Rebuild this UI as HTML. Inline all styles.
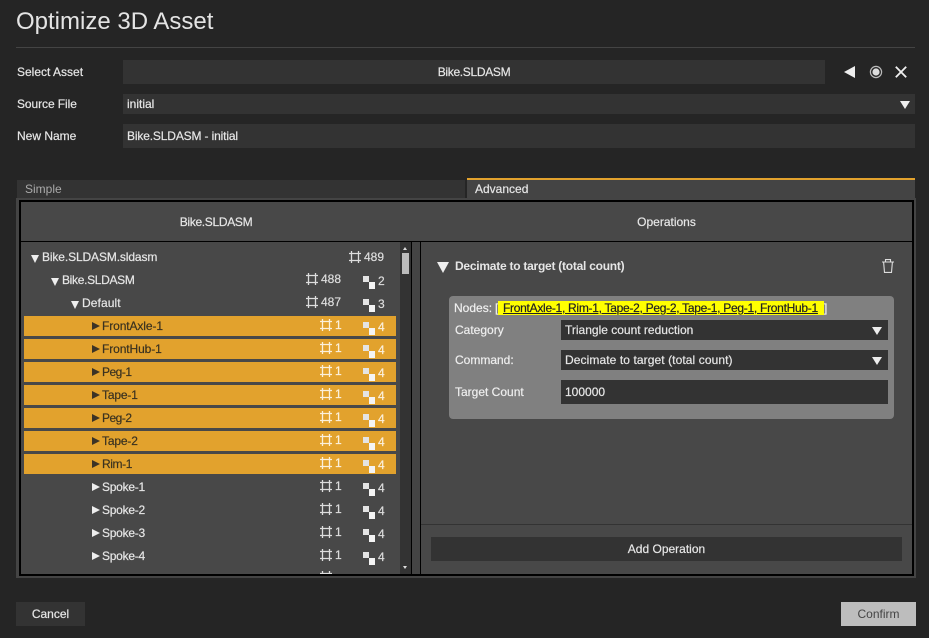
<!DOCTYPE html>
<html><head><meta charset="utf-8">
<style>
*{box-sizing:border-box}
html,body{margin:0;padding:0;width:929px;height:638px;overflow:hidden;background:#252525}
body{position:relative;font-family:"Liberation Sans",sans-serif;font-size:12px;color:#e6e6e6}
.a{position:absolute}
.t{position:absolute;white-space:nowrap;line-height:14px;-webkit-text-stroke:.2px currentColor}
.b{background:#333}
.tri{position:absolute;width:0;height:0}
.d{border-left:5px solid transparent;border-right:5px solid transparent;border-top:8px solid #eee}
.td{border-left:4.5px solid transparent;border-right:4.5px solid transparent;border-top:8px solid #eee}
.r,.rd{border-top:4.5px solid transparent;border-bottom:4.5px solid transparent;border-left:8px solid #eee}
.rd{border-left-color:#3b3326}
.row{position:absolute;left:24px;width:372px;height:20px;background:#e2a22d}
.dk{color:#3a3220}
.n{color:#ddd}
.w{color:#fbf0dc}
svg{position:absolute;overflow:visible}
.s{position:absolute;width:6px;height:6px;background:#e4e4e4}
.s:after{content:"";position:absolute;left:5.5px;top:6px;width:6.5px;height:6.5px;background:#f4f4f4}
.k{letter-spacing:-.32px}
</style></head><body>
<svg width="0" height="0" style="position:absolute"><defs>
<symbol id="h" viewBox="0 0 12 12"><path d="M0 2.5H12M0 9.5H12M2.5 0V12M9.5 0V12" stroke="#ddd" stroke-width="1.3" fill="none"/></symbol>
<symbol id="ho" viewBox="0 0 12 12"><path d="M0 2.5H12M0 9.5H12M2.5 0V12M9.5 0V12" stroke="#fbf0dc" stroke-width="1.3" fill="none"/></symbol>
</defs></svg>

<div class="t" style="left:16px;top:8px;font-size:24px;line-height:28px;color:#e4e4e4;-webkit-text-stroke:0">Optimize 3D Asset</div>
<div class="a" style="left:16px;top:47px;width:899px;height:1px;background:#444"></div>

<div class="t" style="left:17px;top:65px">Select Asset</div>
<div class="a b" style="left:123px;top:60px;width:702px;height:24px"></div>
<div class="t k" style="left:123px;width:702px;top:65px;text-align:center">Bike.SLDASM</div>
<div class="tri" style="left:844px;top:66px;border-top:6px solid transparent;border-bottom:6px solid transparent;border-right:11px solid #eee"></div>
<svg style="left:869px;top:65px" width="14" height="14"><circle cx="7" cy="7" r="5.6" fill="none" stroke="#bbb" stroke-width="1.2"/><circle cx="7" cy="7" r="3.6" fill="#ddd"/></svg>
<svg style="left:895px;top:66px" width="12" height="12"><path d="M.8 .8L11.2 11.2M11.2 .8L.8 11.2" stroke="#f0f0f0" stroke-width="1.8"/></svg>

<div class="t" style="left:17px;top:97px;letter-spacing:-.08px">Source File</div>
<div class="a b" style="left:123px;top:94px;width:792px;height:20px"></div>
<div class="t" style="left:127px;top:97px">initial</div>
<div class="tri d" style="left:900px;top:101px"></div>

<div class="t" style="left:17px;top:129px">New Name</div>
<div class="a b" style="left:123px;top:124px;width:792px;height:24px"></div>
<div class="t" style="left:127px;top:129px;letter-spacing:-.15px">Bike.SLDASM - initial</div>

<div class="a b" style="left:17px;top:180px;width:448px;height:18px"></div>
<div class="t" style="left:25px;top:182px;color:#aaa;-webkit-text-stroke:0">Simple</div>
<div class="a" style="left:467px;top:178px;width:448px;height:20px;background:#444;border-top:2px solid #e2a22d"></div>
<div class="t" style="left:475px;top:182px">Advanced</div>

<div class="a" style="left:16px;top:198px;width:900px;height:380px;background:#444"></div>
<div class="a" style="left:19px;top:200px;width:895px;height:376px;background:#484848;border:2px solid #000"></div>
<div class="a" style="left:21px;top:241px;width:891px;height:1px;background:#000"></div>
<div class="t k" style="left:21px;width:390px;top:215px;text-align:center">Bike.SLDASM</div>
<div class="t" style="left:421px;width:491px;top:215px;text-align:center">Operations</div>

<!-- tree rows -->
<div class="row" style="top:316px"></div>
<div class="row" style="top:339px"></div>
<div class="row" style="top:362px"></div>
<div class="row" style="top:385px"></div>
<div class="row" style="top:408px"></div>
<div class="row" style="top:431px"></div>
<div class="row" style="top:454px"></div>

<div class="tri td" style="left:31px;top:255px"></div><div class="t" style="left:42px;top:250px;letter-spacing:-.12px">Bike.SLDASM.sldasm</div>
<div class="tri td" style="left:51px;top:278px"></div><div class="t k" style="left:62px;top:273px">Bike.SLDASM</div>
<div class="tri td" style="left:71px;top:301px"></div><div class="t" style="left:82px;top:296px;letter-spacing:.1px">Default</div>

<svg style="left:349px;top:251px" width="12" height="12"><use href="#h"/></svg><div class="t n" style="left:364px;top:250px">489</div>
<svg style="left:306px;top:273px" width="12" height="12"><use href="#h"/></svg><div class="t n" style="left:321px;top:272px">488</div>
<div class="s" style="left:363px;top:276px"></div><div class="t n" style="left:378px;top:274px">2</div>
<svg style="left:306px;top:296px" width="12" height="12"><use href="#h"/></svg><div class="t n" style="left:321px;top:295px">487</div>
<div class="s" style="left:363px;top:299px"></div><div class="t n" style="left:378px;top:297px">3</div>

<div class="tri rd" style="left:92px;top:322px"></div><div class="t dk" style="left:102px;top:319px;letter-spacing:-.1px">FrontAxle-1</div>
<div class="tri rd" style="left:92px;top:345px"></div><div class="t dk" style="left:102px;top:342px;letter-spacing:-.1px">FrontHub-1</div>
<div class="tri rd" style="left:92px;top:368px"></div><div class="t dk" style="left:102px;top:365px;letter-spacing:-.5px">Peg-1</div>
<div class="tri rd" style="left:92px;top:391px"></div><div class="t dk" style="left:102px;top:388px;letter-spacing:-.15px">Tape-1</div>
<div class="tri rd" style="left:92px;top:414px"></div><div class="t dk" style="left:102px;top:411px;letter-spacing:-.5px">Peg-2</div>
<div class="tri rd" style="left:92px;top:437px"></div><div class="t dk" style="left:102px;top:434px;letter-spacing:-.15px">Tape-2</div>
<div class="tri rd" style="left:92px;top:460px"></div><div class="t dk" style="left:102px;top:457px;letter-spacing:-.4px">Rim-1</div>

<svg style="left:320px;top:319px" width="12" height="12"><use href="#ho"/></svg><div class="t w" style="left:335px;top:318px">1</div><div class="s" style="left:363px;top:322px"></div><div class="t w" style="left:378px;top:320px">4</div>
<svg style="left:320px;top:342px" width="12" height="12"><use href="#ho"/></svg><div class="t w" style="left:335px;top:341px">1</div><div class="s" style="left:363px;top:345px"></div><div class="t w" style="left:378px;top:343px">4</div>
<svg style="left:320px;top:365px" width="12" height="12"><use href="#ho"/></svg><div class="t w" style="left:335px;top:364px">1</div><div class="s" style="left:363px;top:368px"></div><div class="t w" style="left:378px;top:366px">4</div>
<svg style="left:320px;top:388px" width="12" height="12"><use href="#ho"/></svg><div class="t w" style="left:335px;top:387px">1</div><div class="s" style="left:363px;top:391px"></div><div class="t w" style="left:378px;top:389px">4</div>
<svg style="left:320px;top:411px" width="12" height="12"><use href="#ho"/></svg><div class="t w" style="left:335px;top:410px">1</div><div class="s" style="left:363px;top:414px"></div><div class="t w" style="left:378px;top:412px">4</div>
<svg style="left:320px;top:434px" width="12" height="12"><use href="#ho"/></svg><div class="t w" style="left:335px;top:433px">1</div><div class="s" style="left:363px;top:437px"></div><div class="t w" style="left:378px;top:435px">4</div>
<svg style="left:320px;top:457px" width="12" height="12"><use href="#ho"/></svg><div class="t w" style="left:335px;top:456px">1</div><div class="s" style="left:363px;top:460px"></div><div class="t w" style="left:378px;top:458px">4</div>

<div class="tri r" style="left:92px;top:483px"></div><div class="t" style="left:102px;top:480px;letter-spacing:-.25px">Spoke-1</div>
<div class="tri r" style="left:92px;top:506px"></div><div class="t" style="left:102px;top:503px;letter-spacing:-.25px">Spoke-2</div>
<div class="tri r" style="left:92px;top:529px"></div><div class="t" style="left:102px;top:526px;letter-spacing:-.25px">Spoke-3</div>
<div class="tri r" style="left:92px;top:552px"></div><div class="t" style="left:102px;top:549px;letter-spacing:-.25px">Spoke-4</div>

<svg style="left:320px;top:480px" width="12" height="12"><use href="#h"/></svg><div class="t n" style="left:335px;top:479px">1</div><div class="s" style="left:363px;top:483px"></div><div class="t n" style="left:378px;top:481px">4</div>
<svg style="left:320px;top:503px" width="12" height="12"><use href="#h"/></svg><div class="t n" style="left:335px;top:502px">1</div><div class="s" style="left:363px;top:506px"></div><div class="t n" style="left:378px;top:504px">4</div>
<svg style="left:320px;top:526px" width="12" height="12"><use href="#h"/></svg><div class="t n" style="left:335px;top:525px">1</div><div class="s" style="left:363px;top:529px"></div><div class="t n" style="left:378px;top:527px">4</div>
<svg style="left:320px;top:549px" width="12" height="12"><use href="#h"/></svg><div class="t n" style="left:335px;top:548px">1</div><div class="s" style="left:363px;top:552px"></div><div class="t n" style="left:378px;top:550px">4</div>
<div class="a" style="left:320px;top:571px;width:30px;height:3px;overflow:hidden"><svg style="left:0;top:0" width="12" height="12"><use href="#h"/></svg></div>

<!-- scrollbar -->
<div class="a" style="left:400px;top:242px;width:11px;height:332px;background:#333"></div>
<div class="a" style="left:402px;top:253px;width:7px;height:21px;background:#bbb"></div>
<div class="tri" style="left:403px;top:247px;border-left:2.5px solid transparent;border-right:2.5px solid transparent;border-bottom:3px solid #ddd"></div>
<div class="tri" style="left:403px;top:566px;border-left:2.5px solid transparent;border-right:2.5px solid transparent;border-top:3px solid #ddd"></div>
<div class="a" style="left:411px;top:242px;width:1px;height:332px;background:#000"></div>
<div class="a" style="left:420px;top:242px;width:1px;height:332px;background:#000"></div>
<div class="a" style="left:412px;top:242px;width:8px;height:332px;background:#444"></div>

<!-- operation -->
<div class="tri" style="left:437px;top:262px;border-left:6px solid transparent;border-right:6px solid transparent;border-top:11px solid #eee"></div>
<div class="t" style="left:455px;top:259px;font-weight:bold;color:#e6e6e6;letter-spacing:-.25px;-webkit-text-stroke:0">Decimate to target (total count)</div>
<svg style="left:882px;top:259px" width="12" height="14" viewBox="0 0 12 14" fill="none" stroke="#ddd" stroke-width="1.1"><path d="M0 3H12M3.5 3V.6H8.5V3M1.6 3L2.5 13.4H9.5L10.4 3"/></svg>

<div class="a" style="left:449px;top:296px;width:445px;height:123px;background:#808080;border-radius:4px"></div>
<div class="t" style="left:454px;top:301px;color:#f0f0f0">Nodes:</div>
<div class="t" style="left:495px;top:301px;color:#f0f0f0">[</div>
<div class="a" style="left:498px;top:301px;width:326px;height:14px;background:#ff0"></div>
<div class="t" style="left:503px;top:301px;color:#222;text-decoration:underline;letter-spacing:-.28px">FrontAxle-1, Rim-1, Tape-2, Peg-2, Tape-1, Peg-1, FrontHub-1</div>
<div class="t" style="left:824px;top:301px;color:#f0f0f0">]</div>

<div class="t" style="left:455px;top:323px;color:#eee">Category</div>
<div class="a b" style="left:561px;top:320px;width:327px;height:20px"></div>
<div class="t" style="left:565px;top:323px">Triangle count reduction</div>
<div class="tri d" style="left:872px;top:327px"></div>

<div class="t" style="left:455px;top:353px;color:#eee">Command:</div>
<div class="a b" style="left:561px;top:350px;width:327px;height:20px"></div>
<div class="t" style="left:565px;top:353px;letter-spacing:.09px">Decimate to target (total count)</div>
<div class="tri d" style="left:872px;top:357px"></div>

<div class="t" style="left:455px;top:385px;color:#eee">Target Count</div>
<div class="a b" style="left:561px;top:380px;width:327px;height:24px"></div>
<div class="t" style="left:565px;top:385px">100000</div>

<div class="a" style="left:421px;top:524px;width:491px;height:1px;background:#333"></div>
<div class="a b" style="left:431px;top:537px;width:471px;height:24px"></div>
<div class="t" style="left:431px;width:471px;top:542px;text-align:center">Add Operation</div>

<div class="a b" style="left:16px;top:602px;width:69px;height:24px"></div>
<div class="t" style="left:16px;width:69px;top:607px;text-align:center">Cancel</div>
<div class="a" style="left:841px;top:602px;width:75px;height:24px;background:#bdbdbd"></div>
<div class="t" style="left:841px;width:75px;top:607px;text-align:center;color:#444;-webkit-text-stroke:0">Confirm</div>
</body></html>
